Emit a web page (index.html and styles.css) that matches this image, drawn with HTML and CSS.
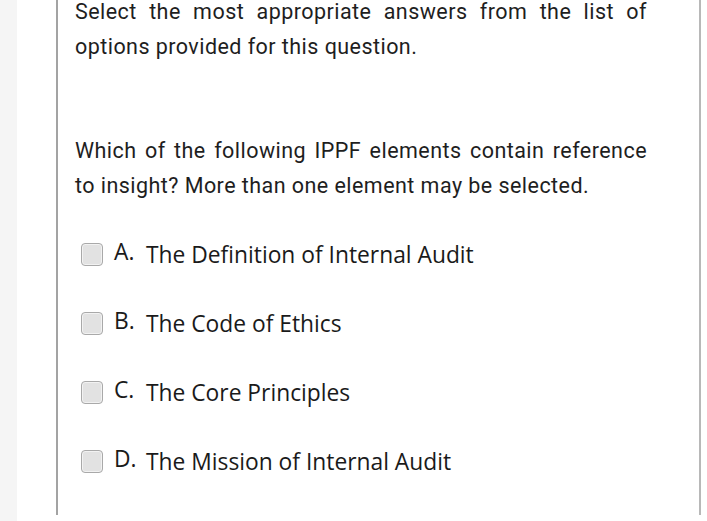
FILE: index.html
```html
<!DOCTYPE html>
<html>
<head>
<meta charset="utf-8">
<link rel="stylesheet" href="styles.css">
</head>
<body>
<div class="page">
  <div class="gutter"></div>
  <div class="main">
    <div class="card">
      <p class="instr">Select the most appropriate answers from the list of options provided for this question.</p>
      <p class="question">Which of the following IPPF elements contain reference to insight? More than one element may be selected.</p>
      <ul class="options">
        <li class="option"><span class="box"></span><span class="letter">A.</span><span class="label">The Definition of Internal Audit</span></li>
        <li class="option"><span class="box"></span><span class="letter">B.</span><span class="label">The Code of Ethics</span></li>
        <li class="option"><span class="box"></span><span class="letter">C.</span><span class="label">The Core Principles</span></li>
        <li class="option"><span class="box"></span><span class="letter">D.</span><span class="label">The Mission of Internal Audit</span></li>
      </ul>
    </div>
  </div>
</div>
</body>
</html>
```
FILE: styles.css
```css
html, body {
  margin: 0;
  padding: 0;
  height: 100%;
  overflow: hidden;
  background: #ffffff;
}
.page {
  display: flex;
  height: 521px;
}
.gutter {
  width: 17px;
  background: #f5f5f5;
  flex: none;
}
.main {
  flex: 1;
  padding-left: 39px;
  padding-right: 6px;
  background: #fff;
}
.card {
  height: 100%;
  border-left: 2px solid #a3a3a3;
  border-right: 2px solid #b8b8b8;
  padding: 0 52px 0 17px;
  box-sizing: border-box;
  color: #1e1e1e;
}
.instr, .question {
  font-family: Roboto, "Liberation Sans", sans-serif;
  font-size: 21.5px;
  letter-spacing: 0.45px;
  line-height: 35px;
  text-align: justify;
  margin: 0;
}
.instr {
  margin-top: -6px;
}
.question {
  margin-top: 69px;
}
.options {
  list-style: none;
  margin: 17px 0 0 0;
  padding: 0 0 0 6px;
}
.option {
  display: flex;
  align-items: center;
  height: 69px;
  font-family: "Open Sans", "Noto Sans", sans-serif;
  font-size: 22.8px;
  color: #1a1a1a;
}
.box {
  width: 20px;
  height: 21px;
  border: 1px solid #a9a9a9;
  border-radius: 4px;
  background: #e2e2e2;
  box-shadow: inset 0 0 0 1px #f2f2f2;
  flex: none;
  margin-right: 11px;
}
.letter {
  width: 32px;
  position: relative;
  top: -3px;
}
```
